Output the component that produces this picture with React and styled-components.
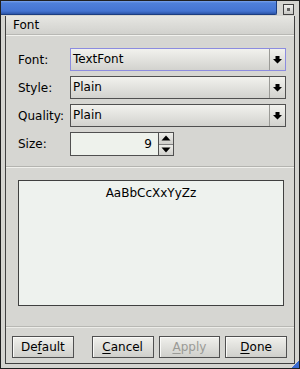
import React from 'react'
import styled, { createGlobalStyle } from 'styled-components'

const Global = createGlobalStyle`
  html, body { margin: 0; padding: 0; background: #d4d4d0; }
  body { font-family: "DejaVu Sans", Verdana, sans-serif; font-size: 12px; color: #000; }
`

const Window = styled.div`
  width: 300px;
  height: 369px;
  box-sizing: border-box;
  border: 1px solid #202020;
  background: #d4d4d0;
  display: flex;
  flex-direction: column;
  position: relative;
`

const TitleBar = styled.div`
  display: flex;
  height: 14px;
  align-items: stretch;
`

const TitleFill = styled.div`
  flex: 1;
  background: linear-gradient(#7aa3ec 0, #4f80da 2px, #4474d2 10px, #2c55a8 13px);
  border-bottom: 1px solid #1c3d80;
  border-right: 1px solid #1c3d80;
  border-radius: 0 0 2px 0;
`

const CloseBox = styled.div`
  width: 22px;
  display: flex;
  align-items: center;
  justify-content: center;
  padding-top: 2px;
`

const CloseBtn = styled.div`
  width: 9px;
  height: 9px;
  border: 1px solid #404040;
  background: linear-gradient(#f0f0ee, #c8c8c4);
  display: flex;
  align-items: center;
  justify-content: center;
  &::after {
    content: '';
    width: 3px;
    height: 3px;
    background: #606060;
  }
`

const Frame = styled.div`
  flex: 1;
  margin: 1px 4px 4px 4px;
  border: 1px solid #404040;
  border-top: none;
  display: flex;
  flex-direction: column;
  background: #d6d6d2;
`

const TabHeader = styled.div`
  height: 19px;
  line-height: 19px;
  padding-left: 7px;
  background: linear-gradient(#e6e6e2, #d0d0cc);
  border-bottom: 1px solid #f2f2ee;
  box-shadow: inset 0 -1px 0 #b8b8b4;
`

const Form = styled.div`
  display: grid;
  grid-template-columns: 52px 216px;
  row-gap: 5px;
  align-items: center;
  padding: 12px 0 10px 12px;
`

const Label = styled.div`
  font-size: 12px;
`

const Combo = styled.div`
  height: 23px;
  box-sizing: border-box;
  border: 1px solid ${p => (p.focused ? '#8c8ce0' : '#505050')};
  background: linear-gradient(#f2f2ee, #d2d2ce);
  display: flex;
  align-items: stretch;
`

const ComboText = styled.div`
  flex: 1;
  padding-left: 2px;
  line-height: 20px;
  font-size: 12px;
`

const ComboArrow = styled.div`
  width: 15px;
  border-left: 1px solid #9a9a96;
  display: flex;
  align-items: center;
  justify-content: center;
`

const SpinRow = styled.div`
  display: flex;
  height: 24px;
`

const SpinInput = styled.div`
  width: 88px;
  box-sizing: border-box;
  border: 1px solid #505050;
  border-right: none;
  background: #eef2ec;
  text-align: right;
  padding-right: 6px;
  line-height: 22px;
`

const SpinButtons = styled.div`
  width: 16px;
  box-sizing: border-box;
  border: 1px solid #505050;
  display: flex;
  flex-direction: column;
`

const SpinHalf = styled.div`
  flex: 1;
  display: flex;
  align-items: center;
  justify-content: center;
  background: linear-gradient(#eeeeea, #d0d0cc);
  & + & { border-top: 1px solid #808080; }
`

const Separator = styled.div`
  height: 0;
  border-top: 1px solid #b4b4b0;
  border-bottom: 1px solid #f0f0ec;
`

const PreviewArea = styled.div`
  flex: 1;
  padding: 12px 10px 20px 12px;
  display: flex;
`

const Preview = styled.div`
  flex: 1;
  border: 1px solid #404040;
  background: #eef2ee;
  text-align: center;
  padding-top: 5px;
  font-size: 12px;
`

const ButtonBar = styled.div`
  display: flex;
  padding: 9px 7px 5px 6px;
  gap: 5px;
  border-top: 1px solid #b8b8b4;
  box-shadow: inset 0 1px 0 #ecece8;
`

const Button = styled.div`
  width: 62px;
  height: 22px;
  box-sizing: border-box;
  border: 1px solid #505050;
  background: linear-gradient(#f0f0ec, #cfcfcb);
  box-shadow: inset 1px 1px 0 #fafaf8;
  display: flex;
  align-items: center;
  justify-content: center;
  font-size: 12px;
  color: ${p => (p.disabled ? '#9a9a96' : '#000')};
  margin-right: ${p => (p.gapAfter ? '13px' : '0')};
  u { text-decoration: underline; text-underline-offset: 2px; }
`

const Grip = styled.div`
  position: absolute;
  right: 0;
  bottom: 0;
  width: 7px;
  height: 7px;
  background: linear-gradient(135deg, transparent 45%, #3a6ad0 50%);
`

const DownArrow = () => (
  <svg width="9" height="9" viewBox="0 0 9 9">
    <path d="M2.5 1h4v3h2.5L4.5 8.5 0 4h2.5z" fill="#000" />
  </svg>
)

const Tri = ({ up }) => (
  <svg width="10" height="6" viewBox="0 0 10 6">
    <path d={up ? 'M5 0.5L9.5 5.5H0.5z' : 'M0.5 0.5H9.5L5 5.5z'} fill="#000" />
  </svg>
)

const combos = [
  { label: 'Font:', value: 'TextFont', focused: true },
  { label: 'Style:', value: 'Plain' },
  { label: 'Quality:', value: 'Plain' },
]

export default function App() {
  return (
    <>
      <Global />
      <Window>
        <TitleBar>
          <TitleFill />
          <CloseBox><CloseBtn /></CloseBox>
        </TitleBar>
        <Frame>
          <TabHeader>Font</TabHeader>
          <Form>
            {combos.map(c => (
              <React.Fragment key={c.label}>
                <Label>{c.label}</Label>
                <Combo focused={c.focused}>
                  <ComboText>{c.value}</ComboText>
                  <ComboArrow><DownArrow /></ComboArrow>
                </Combo>
              </React.Fragment>
            ))}
            <Label>Size:</Label>
            <SpinRow>
              <SpinInput>9</SpinInput>
              <SpinButtons>
                <SpinHalf><Tri up /></SpinHalf>
                <SpinHalf><Tri /></SpinHalf>
              </SpinButtons>
            </SpinRow>
          </Form>
          <Separator />
          <PreviewArea>
            <Preview>AaBbCcXxYyZz</Preview>
          </PreviewArea>
          <ButtonBar>
            <Button gapAfter>De<u>f</u>ault</Button>
            <Button><u>C</u>ancel</Button>
            <Button disabled><u>A</u>pply</Button>
            <Button><u>D</u>one</Button>
          </ButtonBar>
        </Frame>
        <Grip />
      </Window>
    </>
  )
}
